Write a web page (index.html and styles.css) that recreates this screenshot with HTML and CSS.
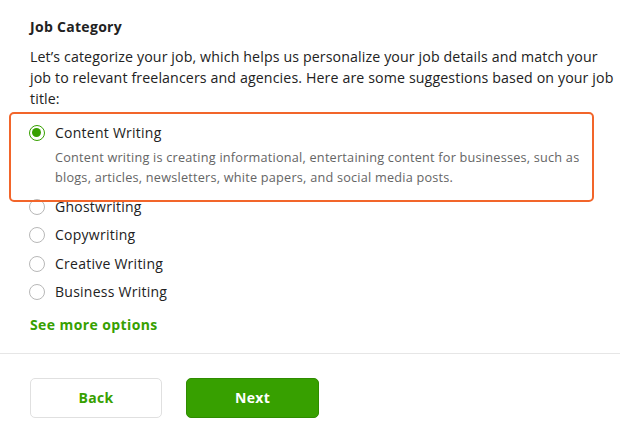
FILE: index.html
```html
<!DOCTYPE html>
<html lang="en">
<head>
<meta charset="utf-8">
<title>Job Category</title>
<link rel="stylesheet" href="styles.css">
</head>
<body>
<div class="page">
  <section class="section">
    <h2 class="title">Job Category</h2>
    <p class="intro">Let’s categorize your job, which helps us personalize your job details and match your job to relevant freelancers and agencies. Here are some suggestions based on your job title:</p>
    <ul class="options">
      <li class="option">
        <div class="row"><span class="radio checked"></span><span class="label">Content Writing</span></div>
        <p class="desc">Content writing is creating informational, entertaining content for businesses, such as blogs, articles, newsletters, white papers, and social media posts.</p>
      </li>
      <li class="option"><div class="row"><span class="radio"></span><span class="label">Ghostwriting</span></div></li>
      <li class="option"><div class="row"><span class="radio"></span><span class="label">Copywriting</span></div></li>
      <li class="option"><div class="row"><span class="radio"></span><span class="label">Creative Writing</span></div></li>
      <li class="option"><div class="row"><span class="radio"></span><span class="label">Business Writing</span></div></li>
    </ul>
    <a class="more" href="#">See more options</a>
  </section>
  <footer class="footer">
    <button class="btn btn-back">Back</button>
    <button class="btn btn-next">Next</button>
  </footer>
  <div class="highlight"></div>
</div>
</body>
</html>
```
FILE: styles.css
```css
* { box-sizing: border-box; }
html, body { margin: 0; padding: 0; background: #fff; }
body {
  font-family: "Open Sans", "Liberation Sans", sans-serif;
  color: #222;
  width: 620px;
  height: 437px;
  overflow: hidden;
}
.page { position: relative; height: 437px; }
.section { padding: 17px 1px 18px 30px; }
.title {
  margin: 0;
  font-size: 14px;
  line-height: 20px;
  font-weight: 700;
  color: #222;
  letter-spacing: 0.3px;
}
.intro {
  margin: 8.5px 0 0;
  font-size: 14.2px;
  line-height: 21px;
  color: #222;
  letter-spacing: 0.12px;
}
.options { list-style: none; margin: 14.5px 0 0; padding: 0; display: flex; flex-direction: column; gap: 8.5px; }
.row { display: flex; align-items: center; gap: 10px; height: 20px; }
.radio {
  width: 16px; height: 16px; border-radius: 50%;
  border: 1.5px solid #b8b8b8; flex: none; margin-left: -1px;
  position: relative; background: #fff;
}
.radio.checked { border-color: #37a000; }
.radio.checked::after {
  content: ""; position: absolute; left: 2px; top: 2px; width: 9px; height: 9px;
  border-radius: 50%; background: #37a000;
}
.label { font-size: 14px; line-height: 20px; color: #222; letter-spacing: 0.25px; }
.desc {
  margin: 4px 20px 1px 25px;
  font-size: 12.7px;
  line-height: 20px;
  color: #656565;
  letter-spacing: 0.22px;
}
.more {
  display: block; margin-top: 12.5px;
  font-size: 14px; line-height: 20px; font-weight: 700;
  color: #37a000; text-decoration: none;
  letter-spacing: 0.4px;
}
.footer {
  border-top: 1px solid #e6e6e6;
  padding: 24px 30px 0;
  display: flex; gap: 24px;
}
.btn {
  width: 132px; height: 40px; border-radius: 5px;
  font-family: inherit; font-size: 14px; font-weight: 700;
  letter-spacing: 0.3px;
  cursor: pointer;
}
.btn-back { background: #fff; border: 1.5px solid #e0e0e0; color: #37a000; }
.btn-next { width: 133px; background: #37a000; border: 1px solid #2f8c00; color: #fff; }
.highlight {
  position: absolute; left: 9px; top: 112px; width: 585px; height: 90px;
  border: 2.5px solid #f2652a; border-radius: 5px; pointer-events: none;
}
```
